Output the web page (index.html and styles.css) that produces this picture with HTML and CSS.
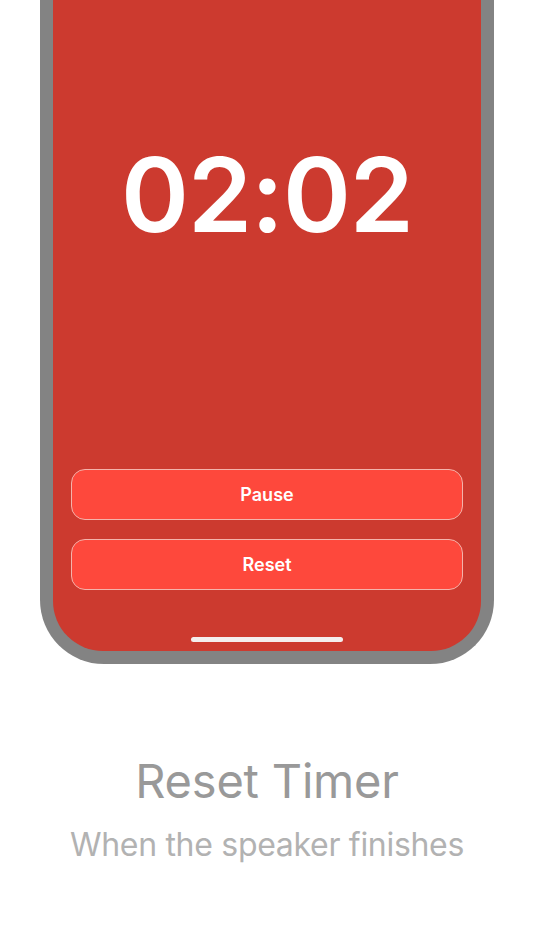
FILE: index.html
```html
<!DOCTYPE html>
<html>
<head>
<meta charset="utf-8">
<link rel="stylesheet" href="styles.css">
</head>
<body>
<div class="page">
  <div class="phone">
    <div class="screen">
      <div class="timer">02:02</div>
      <div class="buttons">
        <div class="btn">Pause</div>
        <div class="btn">Reset</div>
      </div>
      <div class="home"></div>
    </div>
  </div>
  <div class="caption">
    <div class="title">Reset Timer</div>
    <div class="subtitle">When the speaker finishes</div>
  </div>
</div>
</body>
</html>
```
FILE: styles.css
```css
html, body {
  margin: 0;
  padding: 0;
  background: #ffffff;
}
.page {
  width: 534px;
  height: 950px;
  display: flex;
  flex-direction: column;
  align-items: center;
  font-family: Inter, "Liberation Sans", sans-serif;
}
.phone {
  width: 428px;
  height: 651px;
  border: 13px solid #838383;
  border-top: none;
  border-radius: 0 0 64px 64px;
  background: #838383;
}
.screen {
  height: 651px;
  background: #cc3a2f;
  border-radius: 0 0 50px 50px;
  display: flex;
  flex-direction: column;
  align-items: center;
}
.timer {
  margin-top: 133px;
  color: #ffffff;
  font-size: 103px;
  font-weight: 600;
  line-height: 124px;
  letter-spacing: -1px;
}
.buttons {
  margin-top: 212px;
  display: flex;
  flex-direction: column;
  gap: 19px;
}
.btn {
  width: 390px;
  height: 49px;
  box-sizing: content-box;
  border: 1px solid #f4b3ab;
  border-radius: 14px;
  background: #fe483c;
  color: #ffffff;
  font-size: 18px;
  font-weight: 600;
  display: flex;
  align-items: center;
  justify-content: center;
}
.home {
  margin-top: 47px;
  width: 152px;
  height: 5px;
  border-radius: 3px;
  background: #f4eeee;
}
.caption {
  margin-top: 87px;
  display: flex;
  flex-direction: column;
  align-items: center;
}
.title {
  color: #999999;
  font-size: 47px;
  line-height: 60px;
  font-weight: 400;
  letter-spacing: -0.2px;
}
.subtitle {
  margin-top: 14px;
  color: #b2b2b2;
  font-size: 32px;
  line-height: 40px;
  font-weight: 400;
  letter-spacing: -0.3px;
}
```
